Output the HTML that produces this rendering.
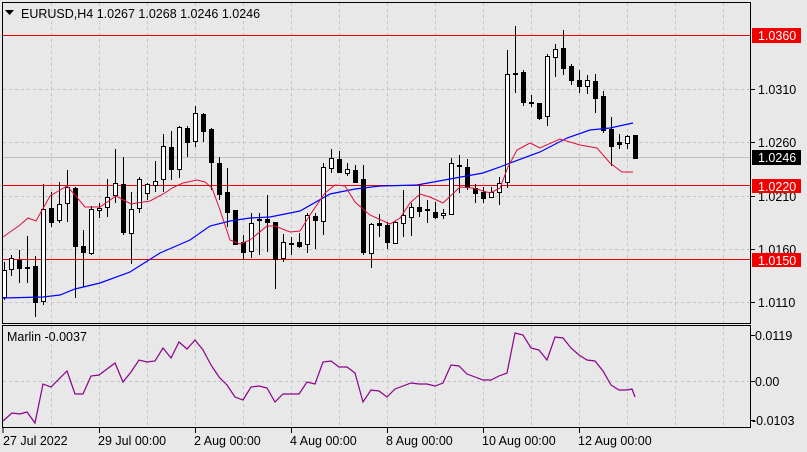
<!DOCTYPE html>
<html><head><meta charset="utf-8"><style>
html,body{margin:0;padding:0;background:#e8e8e8;}
svg{display:block;font-family:"Liberation Sans",sans-serif;}
</style></head><body>
<svg width="807" height="452" viewBox="0 0 807 452" xmlns="http://www.w3.org/2000/svg">
<rect width="807" height="452" fill="#e8e8e8"/>
<g stroke="#c4c4c4" stroke-dasharray="3,3" stroke-width="1">
<path d="M51.5 3V324M99.5 3V324M147.5 3V324M195.5 3V324M243.5 3V324M291.5 3V324M339.5 3V324M387.5 3V324M435.5 3V324M483.5 3V324M531.5 3V324M579.5 3V324M627.5 3V324M675.5 3V324M723.5 3V324"/>
<path d="M3 35.5H750M3 89.5H750M3 142.5H750M3 196.5H750M3 249.5H750M3 302.5H750"/>
<path d="M51.5 326V428M99.5 326V428M147.5 326V428M195.5 326V428M243.5 326V428M291.5 326V428M339.5 326V428M387.5 326V428M435.5 326V428M483.5 326V428M531.5 326V428M579.5 326V428M627.5 326V428M675.5 326V428M723.5 326V428M3 381.5H750"/>
</g>
<path d="M3 157.5H750" stroke="#c0c0c0"/>
<path d="M3 35.5H750M3 185.5H750M3 259.5H750" stroke="#f00000"/>
<g id="c"></g>
<polyline fill="none" stroke="#0000ff" stroke-width="1.2" points="3,298 43,297 60,295 75,289 100,283 130,272 160,253 190,240 210,226 230,221 250,218 270,217 300,211 330,194 355,189 380,186 417,185 450,179 483,173 500,167 510,163 540,152 567,138 590,130 610,128 633,123"/>
<polyline fill="none" stroke="#e0103c" stroke-width="1" points="3,237 20,225 28,218 36,221 50,196 67,186 75,195 85,207 100,207 116,196 131,204 150,201 165,193 172,188 183,183 197,180 205,182 212,188 220,210 230,240 240,244 250,240 267,226 275,226 290,232 300,231 310,215 325,193 335,185 345,186 355,202 370,215 390,224 400,218 410,203 420,194 430,197 443,203 460,187 473,188 490,193 500,188 508,167 517,150 530,143 540,148 560,139 580,145 597,148 610,163 622,172 633,172"/>
<polyline fill="none" stroke="#8b008b" stroke-width="1.2" points="3,421 12,413 20,414 27,412 35,423 43,384 51,387 67,371 75,394 83,394 91,376 99,375 115,363 123,382 131,372 139,360 147,362 155,361 163,348 171,358 179,342 187,349 195,340 203,350 211,365 219,377 227,385 235,397 243,400 251,387 259,386 267,388 275,402 283,394 299,394 307,382 315,384 323,362 331,361 339,367 347,367 355,373 363,402 371,390 379,391 387,397 395,389 403,386 411,383 419,384 427,384 435,386 443,383 451,365 459,366 467,374 475,377 483,380 491,380 499,376 507,373 515,333 523,335 531,348 539,350 547,360 555,337 563,338 571,348 579,355 587,360 595,361 603,371 611,385 619,390 627,390 632,389 635,397"/>
<rect x="2.5" y="2.5" width="748" height="321" fill="none" stroke="#000"/>
<rect x="2.5" y="325.5" width="748" height="102" fill="none" stroke="#000"/>
<g stroke="#000"><path d="M3 428V433M99.5 428V433M195.5 428V433M291.5 428V433M387.5 428V433M483.5 428V433M579.5 428V433"/>
<path d="M751 89.5h4M751 142.5h4M751 196.5h4M751 249.5h4M751 302.5h4M751 335.5h4M751 381.5h4M751 420.5h4"/></g>
<g font-size="12.5" fill="#000">
<path d="M5 10h9l-4.5 5z" fill="#000"/>
<text x="21" y="18">EURUSD,H4  1.0267 1.0268 1.0246 1.0246</text>
<text x="7" y="341">Marlin -0.0037</text>
<text x="758" y="94">1.0310</text>
<text x="758" y="147">1.0260</text>
<text x="758" y="201">1.0210</text>
<text x="758" y="254">1.0160</text>
<text x="758" y="307">1.0110</text>
<text x="755" y="340">0.0119</text>
<text x="755" y="386">0.00</text>
<text x="752" y="425">-0.0103</text>
<text x="3" y="445">27 Jul 2022</text>
<text x="98" y="445">29 Jul 00:00</text>
<text x="194" y="445">2 Aug 00:00</text>
<text x="290" y="445">4 Aug 00:00</text>
<text x="386" y="445">8 Aug 00:00</text>
<text x="482" y="445">10 Aug 00:00</text>
<text x="578" y="445">12 Aug 00:00</text>
</g>
<rect x="752" y="28" width="49" height="15" fill="#f00000"/><text x="758" y="40" font-size="12.5" fill="#fff">1.0360</text>
<rect x="752" y="179" width="49" height="14" fill="#f00000"/><text x="758" y="191" font-size="12.5" fill="#fff">1.0220</text>
<rect x="752" y="253" width="49" height="14" fill="#f00000"/><text x="758" y="265" font-size="12.5" fill="#fff">1.0150</text>
<rect x="752" y="150" width="49" height="15" fill="#000"/><text x="758" y="162" font-size="12.5" fill="#fff">1.0246</text>
</svg>
<script>
var d=[[4,262,297,270,300],[11,255,269,258,276],[19,250,260,268,283],[27,236,268,267,283],[35,256,266,302,317],[43,184,301,209,305],[51,192,208,222,227],[59,182,220,204,223],[67,170,203,187,222],[75,187,188,246,298],[83,230,246,252,287],[91,206,253,209,255],[99,203,210,208,218],[107,179,207,197,217],[115,149,195,183,203],[123,157,184,232,235],[131,192,233,209,264],[139,177,208,179,213],[147,183,193,184,200],[155,161,185,181,192],[163,134,179,146,192],[171,131,147,169,180],[179,126,169,127,178],[187,126,128,142,157],[195,106,141,113,147],[203,113,114,131,142],[211,128,129,162,190],[219,157,163,194,200],[227,168,192,212,227],[235,210,210,244,245],[243,235,242,252,260],[251,213,251,223,258],[259,213,220,219,255],[267,195,219,222,252],[275,222,222,259,289],[283,234,258,242,262],[291,237,243,244,255],[299,233,242,246,248],[307,213,244,215,253],[315,213,216,220,249],[323,163,221,167,235],[331,149,168,158,173],[339,151,159,172,173],[347,163,173,169,176],[355,165,170,182,183],[363,165,179,252,255],[371,223,253,224,268],[379,214,223,225,237],[387,222,225,242,249],[395,221,243,222,244],[403,190,223,215,237],[411,203,217,207,236],[419,185,207,211,217],[427,200,209,210,223],[435,202,212,217,219],[443,209,215,213,219],[451,158,214,163,215],[459,155,166,165,193],[467,159,167,187,190],[475,184,188,193,203],[483,187,192,198,203],[491,187,197,192,198],[499,177,192,183,205],[507,50,182,74,188],[515,26,73,74,93],[523,70,72,102,106],[531,95,102,103,107],[539,103,103,118,120],[547,54,116,56,126],[555,44,57,49,77],[563,30,48,68,75],[571,64,66,80,85],[579,70,80,86,93],[587,75,86,80,94],[595,74,81,98,113],[603,91,96,130,133],[611,117,129,146,166],[619,134,142,144,149],[627,135,143,136,149],[635,135,135,158,158]];
var s='';d.forEach(function(c){var x=c[0],h=c[1],o=c[2],cl=c[3],l=c[4];var top=Math.min(o,cl),b=Math.max(o,cl);var bull=cl<o;
s+='<line x1="'+(x+0.5)+'" y1="'+h+'" x2="'+(x+0.5)+'" y2="'+l+'" stroke="#000"/>';
if(b-top<1){s+='<line x1="'+(x-2)+'" y1="'+(top+0.5)+'" x2="'+(x+3)+'" y2="'+(top+0.5)+'" stroke="#000"/>';}
else s+='<rect x="'+(x-2+0.5)+'" y="'+(top+0.5)+'" width="4" height="'+(b-top)+'" fill="'+(bull?'#fff':'#000')+'" stroke="#000"/>';});
document.getElementById('c').innerHTML=s;
</script>
</body></html>
